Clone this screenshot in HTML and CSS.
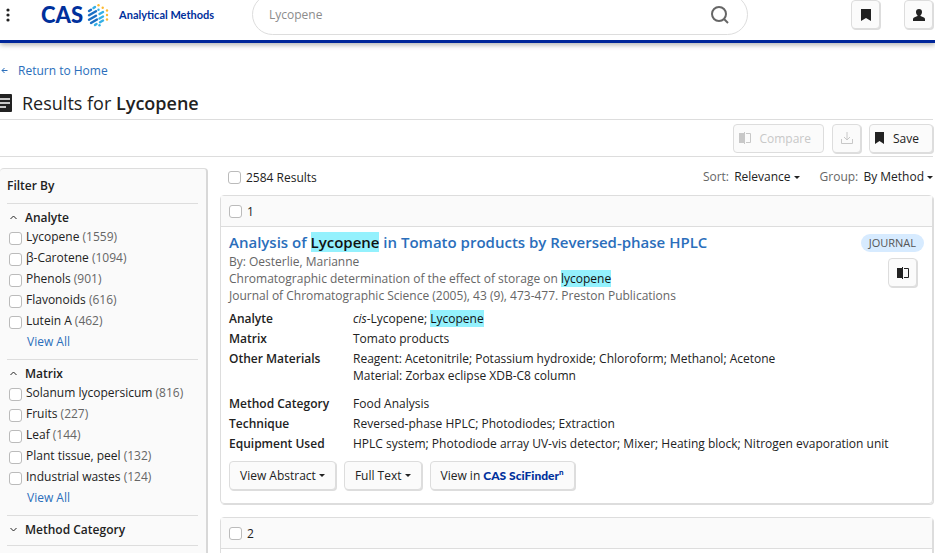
FILE: index.html
```html
<!DOCTYPE html>
<html lang="en">
<head>
    <meta charset="UTF-8">
    <meta name="viewport" content="width=device-width, initial-scale=1.0">
    <title>CAS Analytical Methods</title>
    <link rel="stylesheet" href="styles.css">
</head>
<body>
    <header class="topbar">
        <button class="menu" aria-label="Menu">
            <svg width="4" height="14" viewBox="0 0 4 14" fill="#222"><circle cx="2" cy="2" r="1.6"/><circle cx="2" cy="7" r="1.6"/><circle cx="2" cy="12" r="1.6"/></svg>
        </button>
        <a class="logo" href="#">
            <span class="cas">CAS</span>
            <svg width="22" height="24" viewBox="0 0 22 24" fill="none" stroke-width="2.4" stroke-linecap="round">
                <g stroke="#1a6fc4"><path d="M2 8l2-1.200"/><path d="M2 12.200l7-4"/><path d="M2 16.700l7-4"/><path d="M4 20l6-3.500"/></g>
                <g stroke="#35b0e6"><path d="M6.500 5l1.500-1"/><path d="M11.500 6.700h0"/><path d="M12.500 11l3.500-2"/><path d="M12.500 15.500l3.500-2"/><path d="M13 19.200l3-1.700"/><path d="M8 22l1.500-1"/></g>
                <g stroke="#fdb92e"><path d="M11.500 2.200h0"/><path d="M15.700 4.700h0"/><path d="M20 7.500h0"/><path d="M20 12h0"/><path d="M20 16.500h0"/></g>
                <path d="M12.500 22.300h0" stroke="#35b0e6"/>
            </svg>
            <span class="product">Analytical Methods</span>
        </a>
        <form class="search">
            <input type="text" aria-label="Search" placeholder="Lycopene">
            <button type="button" aria-label="Search">
                <svg width="18" height="18" viewBox="0 0 18 18" fill="none" stroke="#666" stroke-width="2"><circle cx="8" cy="8" r="7"/><path d="M13 13l4 4"/></svg>
            </button>
        </form>
        <div class="account">
            <button class="btn square" aria-label="Saved">
                <svg width="10" height="12" viewBox="0 0 10 12" fill="#222"><path d="M0 0h10v12l-5-3-5 3z"/></svg>
            </button>
            <button class="btn square" aria-label="Account">
                <svg width="12" height="12" viewBox="0 0 12 12" fill="#222"><path d="M6 0a3 3 0 0 1 3 3c0 1.500-.7 2.600-1.500 3.200v.8L11 8.500q1 .5 1 1.500v2H0v-2q0-1 1-1.500L4.500 7v-.8C3.700 5.600 3 4.500 3 3a3 3 0 0 1 3-3z"/></svg>
            </button>
        </div>
    </header>

    <main class="page">
        <a class="back" href="#">
            <svg width="8" height="7" viewBox="0 0 8 7" fill="none" stroke="#2a6ebb"><path d="M7.500 3.500H2M4.500 1L2 3.500 4.500 6"/></svg>
            Return to Home
        </a>
        <h1 class="title">
            <svg width="12" height="18" viewBox="0 0 12 18"><path d="M0 0h11a1 1 0 0 1 1 1v16a1 1 0 0 1-1 1H0z" fill="#222"/><path d="M0 5h10M0 9h10M0 13h6" stroke="#fff" stroke-width="1.500"/></svg>
            <span>Results for <b>Lycopene</b></span>
        </h1>

        <div class="toolbar">
            <button class="btn compare" disabled>
                <svg width="12" height="12" viewBox="0 0 12 12"><path d="M0 1h5v10H0z" fill="currentColor"/><path d="M5.500 0v12M7 1.500h4.500v9H7" fill="none" stroke="currentColor"/></svg>
                Compare
            </button>
            <button class="btn square" aria-label="Download" disabled>
                <svg width="12" height="12" viewBox="0 0 12 12" fill="none" stroke="currentColor"><path d="M6 0v8M3 5l3 3 3-3M.5 7v4.500h11V7"/></svg>
            </button>
            <button class="btn save">
                <svg width="9" height="12" viewBox="0 0 9 12" fill="#222"><path d="M0 0h9v12l-4.500-3L0 12z"/></svg>
                Save
            </button>
        </div>

        <div class="columns">
            <aside class="filters">
                <h2>Filter By</h2>
                <section class="group">
                    <button class="toggle"><svg width="7" height="5" viewBox="0 0 7 5" fill="none" stroke="#222"><path d="M.5 4l3-3 3 3"/></svg>Analyte</button>
                    <label><input type="checkbox"><span>Lycopene <i>(1559)</i></span></label>
                    <label><input type="checkbox"><span>β-Carotene <i>(1094)</i></span></label>
                    <label><input type="checkbox"><span>Phenols <i>(901)</i></span></label>
                    <label><input type="checkbox"><span>Flavonoids <i>(616)</i></span></label>
                    <label><input type="checkbox"><span>Lutein A <i>(462)</i></span></label>
                    <a href="#">View All</a>
                </section>
                <section class="group">
                    <button class="toggle"><svg width="7" height="5" viewBox="0 0 7 5" fill="none" stroke="#222"><path d="M.5 4l3-3 3 3"/></svg>Matrix</button>
                    <label><input type="checkbox"><span>Solanum lycopersicum <i>(816)</i></span></label>
                    <label><input type="checkbox"><span>Fruits <i>(227)</i></span></label>
                    <label><input type="checkbox"><span>Leaf <i>(144)</i></span></label>
                    <label><input type="checkbox"><span>Plant tissue, peel <i>(132)</i></span></label>
                    <label><input type="checkbox"><span>Industrial wastes <i>(124)</i></span></label>
                    <a href="#">View All</a>
                </section>
                <section class="group">
                    <button class="toggle"><svg width="7" height="5" viewBox="0 0 7 5" fill="none" stroke="#222"><path d="M.5 1l3 3 3-3"/></svg>Method Category</button>
                </section>
            </aside>

            <div class="results">
                <div class="summary">
                    <label><input type="checkbox">2584 Results</label>
                    <div class="sorting">
                        <span>Sort: <button class="pick">Relevance<span class="caret"></span></button></span>
                        <span>Group: <button class="pick">By Method<span class="caret"></span></button></span>
                    </div>
                </div>

                <article class="card">
                    <label class="card-head"><input type="checkbox">1</label>
                    <div class="card-body">
                        <div class="intro">
                            <div>
                                <h3><a href="#">Analysis of <mark>Lycopene</mark> in Tomato products by Reversed-phase HPLC</a></h3>
                                <p>By: Oesterlie, Marianne</p>
                                <p>Chromatographic determination of the effect of storage on <mark>lycopene</mark></p>
                                <p>Journal of Chromatographic Science (2005), 43 (9), 473-477. Preston Publications</p>
                            </div>
                            <div class="side">
                                <span class="badge">JOURNAL</span>
                                <button class="btn square" aria-label="Compare">
                                    <svg width="12" height="12" viewBox="0 0 12 12"><path d="M0 1h5v10H0z" fill="#222"/><path d="M5.500 0v12M7 1.500h4.500v9H7" fill="none" stroke="#222"/></svg>
                                </button>
                            </div>
                        </div>
                        <dl class="details">
                            <dt>Analyte</dt><dd><em>cis</em>-Lycopene; <mark>Lycopene</mark></dd>
                            <dt>Matrix</dt><dd>Tomato products</dd>
                            <dt>Other Materials</dt><dd class="materials">Reagent: Acetonitrile; Potassium hydroxide; Chloroform; Methanol; Acetone<br>Material: Zorbax eclipse XDB-C8 column</dd>
                            <dt>Method Category</dt><dd>Food Analysis</dd>
                            <dt>Technique</dt><dd>Reversed-phase HPLC; Photodiodes; Extraction</dd>
                            <dt>Equipment Used</dt><dd>HPLC system; Photodiode array UV-vis detector; Mixer; Heating block; Nitrogen evaporation unit</dd>
                        </dl>
                        <div class="actions">
                            <button class="btn">View Abstract<span class="caret"></span></button>
                            <button class="btn">Full Text<span class="caret"></span></button>
                            <button class="btn">View in <span class="scifinder">CAS SciFinder<sup>n</sup></span></button>
                        </div>
                    </div>
                </article>

                <article class="card">
                    <label class="card-head"><input type="checkbox">2</label>
                    <div class="card-body"></div>
                </article>
            </div>
        </div>
    </main>
</body>
</html>
```
FILE: styles.css
```css
* {
    box-sizing: border-box;
}
html {
    height: 100%;
    overflow: hidden;
}
body {
    height: 100%;
    margin: 0;
    overflow: hidden;
    font-family: "Open Sans", sans-serif;
    font-size: 12px;
    line-height: 17px;
    color: #222;
    background-color: #fff;
}
button, input {
    font: inherit;
    color: inherit;
}
button {
    padding: 0;
    border: none;
    background: none;
    cursor: pointer;
}
a {
    color: #2a6ebb;
    text-decoration: none;
}
svg {
    flex: none;
}
h1, h2, h3, p, dl, dd {
    margin: 0;
}
mark {
    background-color: #94f1fd;
    color: #111;
}

/* top bar */
.topbar {
    display: flex;
    align-items: center;
    height: 43px;
    padding: 0 2px 11px 6px;
    border-bottom: 3px solid #00269a;
    box-shadow: 0 2px 5px rgba(0, 0, 0, 0.3);
}
.menu {
    display: flex;
    margin-right: 31px;
}
.logo {
    display: flex;
    flex: none;
    align-items: center;
    width: 211px;
    color: #00309c;
    font-family: Lato, sans-serif;
}
.cas {
    margin-right: 4px;
    font-size: 22px;
    font-weight: 900;
    line-height: 24px;
}
.product {
    margin-left: 10px;
    font-size: 11px;
    font-weight: 700;
}
.search {
    display: flex;
    flex: 1;
    align-items: center;
    height: 41px;
    padding: 0 18px 0 16px;
    border: 1px solid #ddd;
    border-radius: 21px;
}
.search input {
    flex: 1;
    padding: 0;
    border: none;
    outline: none;
}
.search input::placeholder {
    color: #8c8c8c;
}
.search button {
    display: flex;
}
.account {
    display: flex;
    gap: 24px;
    margin-left: 103px;
}

.btn {
    display: flex;
    align-items: center;
    justify-content: center;
    height: 29px;
    padding: 0 10px;
    border: 1px solid #ddd;
    border-radius: 4px;
    background-color: #fbfbfb;
    box-shadow: 1px 1px 0 #ddd;
    white-space: nowrap;
}
.btn:disabled {
    color: #c8c8c8;
    cursor: default;
}
.square {
    width: 29px;
    padding: 0;
}
.caret {
    display: inline-block;
    margin-left: 3px;
    border: 3px solid transparent;
    border-top-color: #222;
    border-bottom: none;
    vertical-align: middle;
}

/* page heading */
.page {
    padding: 19px 2px 0 0;
}
.back {
    display: flex;
    align-items: center;
    gap: 10px;
}
.title {
    display: flex;
    align-items: center;
    gap: 10px;
    height: 40px;
    padding-top: 7px;
    font-size: 18px;
    font-weight: 400;
    line-height: 24px;
}
.title b {
    font-weight: 600;
}
.toolbar {
    display: flex;
    align-items: center;
    justify-content: flex-end;
    gap: 8px;
    height: 38px;
    border-top: 1px solid #ddd;
    border-bottom: 1px solid #ddd;
}
.compare {
    gap: 8px;
    padding: 0 12px 0 5px;
    box-shadow: none;
}
.save {
    gap: 9px;
    padding: 0 13px 0 5px;
}

.columns {
    display: flex;
    align-items: flex-start;
    gap: 12px;
    padding-top: 11px;
}
input[type="checkbox"] {
    flex: none;
    appearance: none;
    width: 13px;
    height: 13px;
    margin: 0;
    border: 1px solid #bbb;
    border-radius: 3px;
    background-color: #fff;
}

/* filters */
.filters {
    flex: none;
    width: 208px;
    padding: 0 8px 20px 7px;
    border-top: 1px solid #ddd;
    border-right: 2px solid #d8d8d8;
    border-radius: 4px;
    background-color: #fafafa;
}
.filters h2 {
    padding: 8px 0 9px;
    font-size: 12px;
    font-weight: 600;
}
.group {
    display: flex;
    flex-direction: column;
    padding: 4px 0 7px;
    border-top: 1px solid #ddd;
}
.group:last-child {
    border-bottom: 1px solid #ddd;
}
.toggle {
    display: flex;
    align-items: center;
    gap: 8px;
    height: 18px;
    padding-left: 3px;
    font-weight: 600;
}
.group label {
    display: flex;
    align-items: center;
    gap: 4px;
    height: 21px;
    padding-left: 2px;
}
.group input {
    margin-top: 4px;
}
.group i {
    color: #666;
    font-style: normal;
}
.group a {
    padding-left: 20px;
    line-height: 21px;
}

/* results */
.results {
    flex: 1;
    min-width: 0;
}
.summary {
    display: flex;
    align-items: center;
    justify-content: space-between;
    height: 16px;
    margin-bottom: 11px;
}
.summary label {
    display: flex;
    align-items: center;
    gap: 5px;
    padding: 3px 0 0 8px;
}
.sorting {
    display: flex;
    gap: 20px;
    color: #666;
}
.pick {
    margin-left: 2px;
    color: #222;
}
.card {
    margin-bottom: 13px;
    border: 1px solid #ddd;
    border-radius: 4px;
    box-shadow: 1px 1px 0 #ddd;
}
.card-head {
    display: flex;
    align-items: center;
    gap: 5px;
    height: 31px;
    padding-left: 8px;
    border-bottom: 1px solid #ddd;
    background-color: #fafafa;
}
.card-body {
    padding: 4px 8px 13px;
}
.intro {
    display: flex;
    justify-content: space-between;
    color: #666;
}
.intro h3 {
    font-size: 15px;
    font-weight: 600;
    line-height: 22px;
}
.side {
    display: flex;
    flex-direction: column;
    align-items: flex-end;
    padding-top: 3px;
}
.badge {
    margin-bottom: 6px;
    padding: 0 8px;
    border-radius: 9px;
    background-color: #d7ebff;
    color: #555;
    font-size: 11px;
    line-height: 18px;
}
.side .btn {
    margin-right: 7px;
}
.details {
    display: grid;
    grid-template-columns: 124px 1fr;
    row-gap: 3px;
    padding: 6px 0 9px;
}
.details dt {
    font-weight: 600;
}
.materials {
    padding-bottom: 8px;
}
.actions {
    display: flex;
    gap: 8px;
}
.scifinder {
    margin-left: 3px;
    color: #00309c;
    font-family: Lato, sans-serif;
    font-weight: 900;
}
.scifinder sup {
    font-size: 8px;
    line-height: 0;
}
```
